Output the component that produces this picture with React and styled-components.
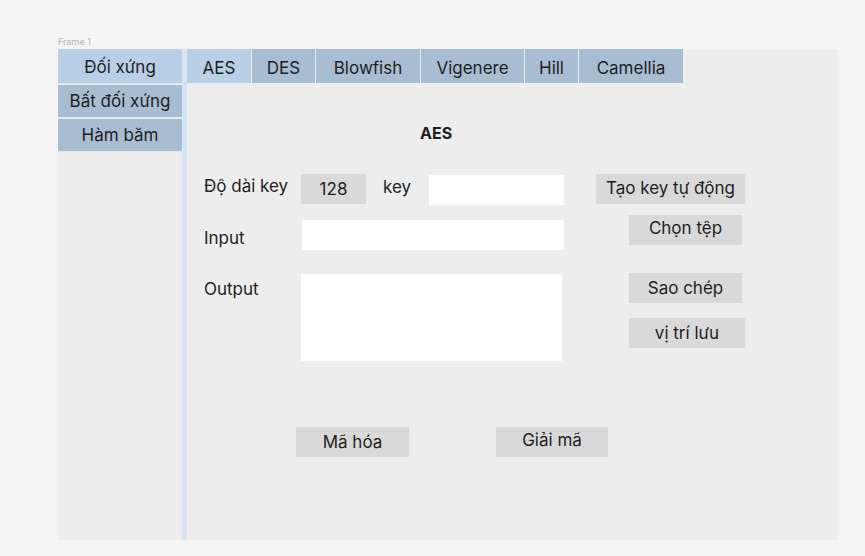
import React from "react";
import styled, { createGlobalStyle } from "styled-components";

const GlobalStyle = createGlobalStyle`
    body {
        margin: 0;
        background: #f4f4f4;
        font-family: Inter, "Noto Sans", sans-serif;
        color: #1e1e1e;
    }
`

const Page = styled.div`
    padding: 35px 0 0 58px;
`

const FrameLabel = styled.div`
    font-size: 9px;
    line-height: 14px;
    color: #b4b4b4;
`

const Frame = styled.div`
    display: flex;
    width: 780px;
    height: 491px;
    background: #ededed;
`

const Sidebar = styled.div`
    display: flex;
    flex-direction: column;
    gap: 1px;
    width: 124px;
`

const SideItem = styled.div`
    height: ${props => props.$active ? '35px' : '33px'};
    display: flex;
    align-items: center;
    justify-content: center;
    padding-top: ${props => props.$active ? '2px' : '0'};
    box-sizing: border-box;
    font-size: 17px;
    background: ${props => props.$active ? '#b9cfe6' : '#a9bdd2'};
    border-bottom: 1px solid #dfe6ee;
`

const Divider = styled.div`
    width: 5px;
    background: #d6e5f5;
`

const Content = styled.div`
    flex: 1;
    display: flex;
    flex-direction: column;
`

const Tabs = styled.div`
    display: flex;
    gap: 1px;
    height: 34px;
`

const Tab = styled.div`
    width: ${props => props.$w}px;
    display: flex;
    align-items: center;
    justify-content: center;
    padding-top: 3px;
    box-sizing: border-box;
    font-size: 17px;
    background: ${props => props.$active ? '#b9cfe6' : '#a9bdd2'};
`

const Title = styled.h1`
    margin: 40px 0 0 233px;
    font-size: 16px;
    line-height: 20px;
    font-weight: 700;
`

const Form = styled.div`
    display: flex;
    flex-direction: column;
    padding-left: 17px;
    margin-top: 31px;
`

const Row = styled.div`
    display: flex;
    align-items: flex-start;
    margin-top: ${props => props.$top || 0}px;
`

const Label = styled.div`
    width: ${props => props.$w}px;
    margin-left: ${props => props.$left || 0}px;
    margin-top: ${props => props.$top || 0}px;
    font-size: 17px;
    line-height: 20px;
`

const Field = styled.div`
    width: ${props => props.$w}px;
    height: ${props => props.$h || 30}px;
    margin-top: ${props => props.$top || 0}px;
    margin-left: ${props => props.$left || 0}px;
    background: #ffffff;
`

const GrayBox = styled.div`
    width: ${props => props.$w}px;
    height: 30px;
    margin-left: ${props => props.$left || 0}px;
    display: flex;
    align-items: center;
    justify-content: center;
    padding-bottom: ${props => props.$raise || 0}px;
    box-sizing: border-box;
    font-size: 17px;
    background: #d9d9d9;
`

const SideColumn = styled.div`
    display: flex;
    flex-direction: column;
    gap: 15px;
    margin-left: ${props => props.$left}px;
`

const tabs = [
    { name: 'AES', w: 64 },
    { name: 'DES', w: 63 },
    { name: 'Blowfish', w: 104 },
    { name: 'Vigenere', w: 103 },
    { name: 'Hill', w: 53 },
    { name: 'Camellia', w: 104 },
]

const App = () => {

    return (
        <Page>
            <GlobalStyle/>
            <FrameLabel>Frame 1</FrameLabel>
            <Frame>
                <Sidebar>
                    <SideItem $active>Đối xứng</SideItem>
                    <SideItem>Bất đối xứng</SideItem>
                    <SideItem>Hàm băm</SideItem>
                </Sidebar>
                <Divider/>
                <Content>
                    <Tabs>
                        {tabs.map((t, i) => (
                            <Tab key={t.name} $w={t.w} $active={i === 0}>{t.name}</Tab>
                        ))}
                    </Tabs>
                    <Title>AES</Title>
                    <Form>
                        <Row>
                            <Label $w={97} $top={2}>Độ dài key</Label>
                            <GrayBox $w={65}>128</GrayBox>
                            <Label $w={46} $left={17} $top={3}>key</Label>
                            <Field $w={135} $top={1}/>
                            <GrayBox $w={149} $left={32} $raise={2}>Tạo key tự động</GrayBox>
                        </Row>
                        <Row $top={10}>
                            <Label $w={98} $top={13}>Input</Label>
                            <Field $w={262} $top={5}/>
                            <GrayBox $w={113} $left={65} $raise={4}>Chọn tệp</GrayBox>
                        </Row>
                        <Row $top={23}>
                            <Label $w={97} $top={6}>Output</Label>
                            <Field $w={261} $h={87} $top={1}/>
                            <SideColumn $left={67}>
                                <GrayBox $w={113}>Sao chép</GrayBox>
                                <GrayBox $w={116}>vị trí lưu</GrayBox>
                            </SideColumn>
                        </Row>
                        <Row $top={66}>
                            <GrayBox $w={113} $left={92}>Mã hóa</GrayBox>
                            <GrayBox $w={112} $left={87} $raise={5}>Giải mã</GrayBox>
                        </Row>
                    </Form>
                </Content>
            </Frame>
        </Page>
    )

}

export default App
